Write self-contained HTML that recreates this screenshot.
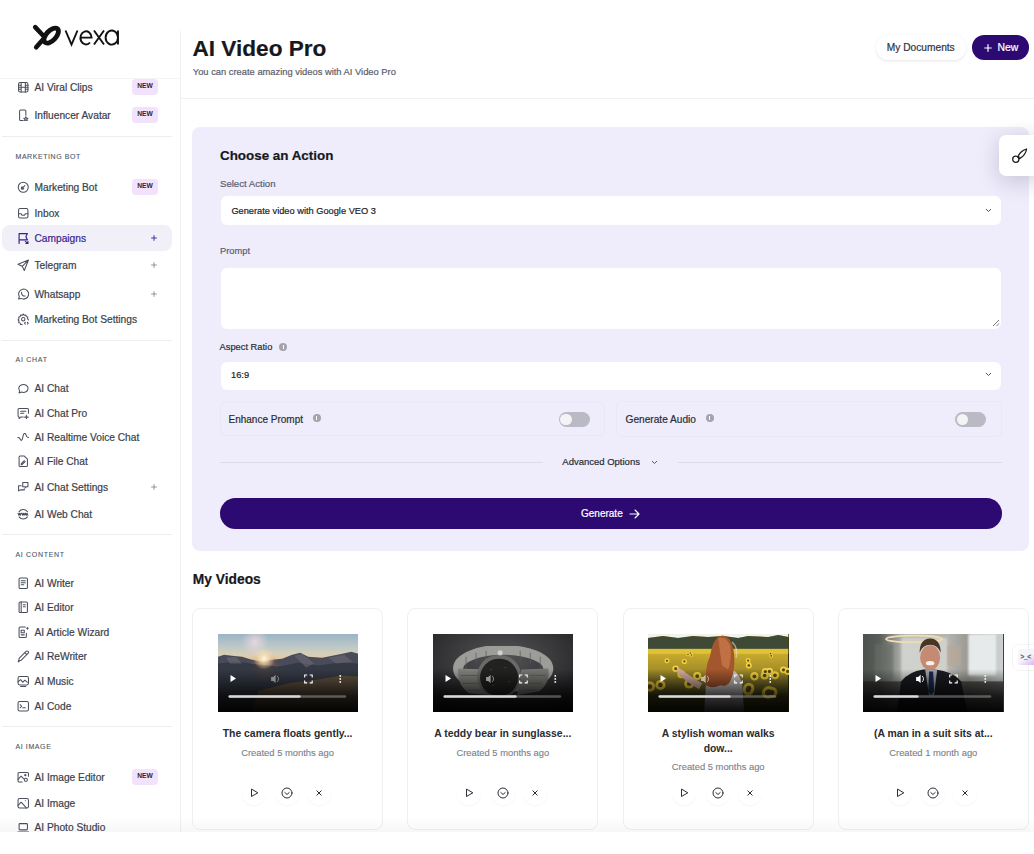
<!DOCTYPE html>
<html><head><meta charset="utf-8">
<style>
*{box-sizing:border-box;margin:0;padding:0}
html,body{width:1034px;height:854px;overflow:hidden;background:#fff}
body{font-family:"Liberation Sans",sans-serif;color:#1f2128;position:relative;-webkit-text-stroke:0.2px}
.abs{position:absolute}
#page{position:absolute;left:0;top:0;width:1034px;height:832px;overflow:hidden;background:#fff}
#side{position:absolute;left:0;top:0;width:180px;height:832px;background:#fff}
#logoline{position:absolute;left:0;top:78px;width:180px;height:1px;background:#f3f4f6}
.it{position:absolute;left:2px;width:170px;height:26px;line-height:24px;font-size:10.2px;color:#3a3f4b;white-space:nowrap}
.it.act{color:#3b1f8c}
.it.act:before{content:'';position:absolute;left:0;top:-1.4px;width:169.5px;height:26.2px;background:#f1eff8;border-radius:8px}
.it .tx{position:absolute;left:32.5px;top:1px}
.it svg{position:absolute;left:14.5px;top:6px;width:12.5px;height:12.5px}
.badge{position:absolute;left:130px;top:4px;width:26px;height:16px;border-radius:4px;background:#f3e2fb;color:#2a2540;font-size:6.7px;font-weight:700;line-height:14.5px;text-align:center;-webkit-text-stroke:0}
.it svg.plus{position:absolute;left:149.1px;top:9px;width:6px;height:6px;stroke:#858a94}
.it.act svg.plus{stroke:#3b1f8c}
.sec{position:absolute;left:15.5px;font-size:7px;font-weight:400;color:#4f545f;-webkit-text-stroke:0.1px;letter-spacing:0.5px;height:12px;line-height:12px}
.sep{position:absolute;left:2px;width:170px;height:1px;background:#eceef1}
</style></head>
<body>
<div id="page">
<div id="side">
<svg class="abs" style="left:28px;top:20px" width="95" height="34" viewBox="0 0 95 34">
<g fill="none" stroke="#111" stroke-linecap="round">
<path d="M7.2 7.2 L16 16.5" stroke-width="4.6"/>
<path d="M8.2 27.3 L15 19.5" stroke-width="4.6"/>
<ellipse cx="23.2" cy="15.6" rx="9.2" ry="4.9" transform="rotate(-47 23.2 15.6)" stroke-width="4.8"/>
<g stroke-width="1.9" stroke-linecap="butt" stroke-linejoin="miter">
<path d="M37.5 10.5 L43.5 24.5 L49.5 10.5"/>
<path d="M52.5 17.6 H63.6 A5.6 6.6 0 1 0 62 22.5"/>
<path d="M66 10.5 L76 24.5 M76 10.5 L66 24.5"/>
<path d="M90 10.5 V24.5 M90 17.5 A6.2 7 0 1 0 90 17.6"/>
</g></g></svg>
<div id="logoline"></div>
<div class="it" style="top:75.0px"><svg viewBox="0 0 12 12" stroke="#4a4f5c" stroke-width="1" fill="none" stroke-linecap="round" stroke-linejoin="round"><rect x="1.5" y="1.5" width="9" height="9" rx="1.5"/><path d="M4 1.5v9M8 1.5v9M1.5 6h9M1.5 4h2.5M1.5 8h2.5M8 4h2.5M8 8h2.5"/></svg><span class="tx">AI Viral Clips</span><div class="badge">NEW</div></div>
<div class="it" style="top:102.7px"><svg viewBox="0 0 12 12" stroke="#4a4f5c" stroke-width="1" fill="none" stroke-linecap="round" stroke-linejoin="round"><path d="M6 11H3.5a1 1 0 0 1-1-1V2a1 1 0 0 1 1-1h4a1 1 0 0 1 1 1v4"/><path d="M8.5 7.5l.7 1.3 1.3.2-1 .9.3 1.3-1.3-.7-1.2.7.3-1.3-1-.9 1.3-.2z"/></svg><span class="tx">Influencer Avatar</span><div class="badge">NEW</div></div>
<div class="sep" style="top:136.2px"></div>
<div class="sec" style="top:150.8px;letter-spacing:0.56px">MARKETING BOT</div>
<div class="it" style="top:174.9px"><svg viewBox="0 0 12 12" stroke="#4a4f5c" stroke-width="1" fill="none" stroke-linecap="round" stroke-linejoin="round"><circle cx="6" cy="6" r="4.8"/><path d="M4.5 7.5l3-3M5 5.5a1.2 1.2 0 1 0 1.5 1.5"/></svg><span class="tx">Marketing Bot</span><div class="badge">NEW</div></div>
<div class="it" style="top:200.7px"><svg viewBox="0 0 12 12" stroke="#4a4f5c" stroke-width="1" fill="none" stroke-linecap="round" stroke-linejoin="round"><rect x="1.5" y="1.5" width="9" height="9" rx="1.5"/><path d="M1.5 6.5h2.5l.8 1.5h2.4l.8-1.5h2.5"/></svg><span class="tx">Inbox</span></div>
<div class="it act" style="top:226.2px"><svg viewBox="0 0 12 12" stroke="#3b1f8c" stroke-width="1.1" fill="none" stroke-linecap="round" stroke-linejoin="round"><path d="M2 11V1.5h8L8.5 4.5 10 7.5H2"/><path d="M8 9l2.5 2M10.5 9v2H8.5"/></svg><span class="tx">Campaigns</span><svg class="plus" viewBox="0 0 6 6"><path d="M3 0.2v5.6M0.2 3h5.6" stroke-width="0.9"/></svg></div>
<div class="it" style="top:253.4px"><svg viewBox="0 0 12 12" stroke="#4a4f5c" stroke-width="1" fill="none" stroke-linecap="round" stroke-linejoin="round"><path d="M11 1L1 5l4 2 2 4z M5 7l6-6"/></svg><span class="tx">Telegram</span><svg class="plus" viewBox="0 0 6 6"><path d="M3 0.2v5.6M0.2 3h5.6" stroke-width="0.9"/></svg></div>
<div class="it" style="top:281.5px"><svg viewBox="0 0 12 12" stroke="#4a4f5c" stroke-width="1" fill="none" stroke-linecap="round" stroke-linejoin="round"><path d="M1.5 10.5l.7-2.3A4.8 4.8 0 1 1 4 10z"/><path d="M4.3 4.2c0 2 1.5 3.5 3.5 3.5"/></svg><span class="tx">Whatsapp</span><svg class="plus" viewBox="0 0 6 6"><path d="M3 0.2v5.6M0.2 3h5.6" stroke-width="0.9"/></svg></div>
<div class="it" style="top:306.7px"><svg viewBox="0 0 12 12" stroke="#4a4f5c" stroke-width="1" fill="none" stroke-linecap="round" stroke-linejoin="round"><path d="M6 1l1 1.2 1.5-.3.5 1.5 1.4.6-.3 1.5L11 6.6M6 1L5 2.2 3.5 1.9 3 3.4l-1.4.6.3 1.5L1 6.6l.9 1 -.3 1.5 1.4.6.5 1.5 1.5-.3"/><circle cx="6" cy="6" r="1.6"/><path d="M8 9l-.8.8.8.8M10 9l.8.8-.8.8"/></svg><span class="tx">Marketing Bot Settings</span></div>
<div class="sep" style="top:339.5px"></div>
<div class="sec" style="top:353.9px;letter-spacing:0.73px">AI CHAT</div>
<div class="it" style="top:376.3px"><svg viewBox="0 0 12 12" stroke="#4a4f5c" stroke-width="1" fill="none" stroke-linecap="round" stroke-linejoin="round"><path d="M2 10.5l.6-2A4.5 3.8 0 1 1 4.5 9.7z"/></svg><span class="tx">AI Chat</span></div>
<div class="it" style="top:400.7px"><svg viewBox="0 0 12 12" stroke="#4a4f5c" stroke-width="1" fill="none" stroke-linecap="round" stroke-linejoin="round"><path d="M6 9.5H4L2 11V9.5a1 1 0 0 1-1-1V2.5a1 1 0 0 1 1-1h8a1 1 0 0 1 1 1V6"/><path d="M3.5 4h5M3.5 6h3M9 8v3.5M7.3 9.7h3.5"/></svg><span class="tx">AI Chat Pro</span></div>
<div class="it" style="top:425.0px"><svg viewBox="0 0 12 12" stroke="#4a4f5c" stroke-width="1" fill="none" stroke-linecap="round" stroke-linejoin="round"><path d="M0.8 6.2 Q2.5 6 3.2 8 Q4 10.2 5 8 L6.2 3.5 Q7 1.8 8 2.6 Q8.8 3.4 9.2 5.2 Q9.6 6.2 11.2 6.2"/></svg><span class="tx">AI Realtime Voice Chat</span></div>
<div class="it" style="top:449.4px"><svg viewBox="0 0 12 12" stroke="#4a4f5c" stroke-width="1" fill="none" stroke-linecap="round" stroke-linejoin="round"><path d="M7 1H3a1 1 0 0 0-1 1v8a1 1 0 0 0 1 1h6a1 1 0 0 0 1-1V4z"/><path d="M4 8.5l3-3 .8.8-3 3H4z"/></svg><span class="tx">AI File Chat</span></div>
<div class="it" style="top:475.4px"><svg viewBox="0 0 12 12" stroke="#4a4f5c" stroke-width="1" fill="none" stroke-linecap="round" stroke-linejoin="round"><path d="M5.5 1.5h5v4H9l-1 1v-1H5.5zM4 4.5H1.5v5L3 8.5h4V7.5"/></svg><span class="tx">AI Chat Settings</span><svg class="plus" viewBox="0 0 6 6"><path d="M3 0.2v5.6M0.2 3h5.6" stroke-width="0.9"/></svg></div>
<div class="it" style="top:501.9px"><svg viewBox="0 0 12 12" stroke="#4a4f5c" stroke-width="1" fill="none" stroke-linecap="round" stroke-linejoin="round"><path d="M2 3.5a5 5 0 0 1 8 0M2 8.5a5 5 0 0 0 8 0M1 5l.8 2 .7-2 .7 2 .8-2M4.7 5l.8 2 .7-2 .7 2 .8-2M8.2 5l.8 2 .7-2 .7 2"/></svg><span class="tx">AI Web Chat</span></div>
<div class="sep" style="top:533.5px"></div>
<div class="sec" style="top:549.0px;letter-spacing:0.68px">AI CONTENT</div>
<div class="it" style="top:571.0px"><svg viewBox="0 0 12 12" stroke="#4a4f5c" stroke-width="1" fill="none" stroke-linecap="round" stroke-linejoin="round"><rect x="2" y="1" width="8" height="10" rx="1"/><path d="M4 3.5h4M4 5.5h4M4 7.5h2.5"/></svg><span class="tx">AI Writer</span></div>
<div class="it" style="top:595.4px"><svg viewBox="0 0 12 12" stroke="#4a4f5c" stroke-width="1" fill="none" stroke-linecap="round" stroke-linejoin="round"><rect x="2" y="1" width="8" height="10" rx="1"/><path d="M4 1v10M6 3.5h2M6 5.5h2"/></svg><span class="tx">AI Editor</span></div>
<div class="it" style="top:619.8px"><svg viewBox="0 0 12 12" stroke="#4a4f5c" stroke-width="1" fill="none" stroke-linecap="round" stroke-linejoin="round"><path d="M8 1H3a1 1 0 0 0-1 1v8a1 1 0 0 0 1 1h5a1 1 0 0 0 1-1V7"/><rect x="4" y="4" width="3" height="2.5"/><path d="M4 8.5h3M10 1.5v1.5M9.2 2.2h1.6"/></svg><span class="tx">AI Article Wizard</span></div>
<div class="it" style="top:644.2px"><svg viewBox="0 0 12 12" stroke="#4a4f5c" stroke-width="1" fill="none" stroke-linecap="round" stroke-linejoin="round"><path d="M1.5 10.5l.7-2.6 6.5-6.5a1.3 1.3 0 0 1 1.9 1.9L4.1 9.8z M7.5 2.6l1.9 1.9M1 11.2h1"/></svg><span class="tx">AI ReWriter</span></div>
<div class="it" style="top:669.3px"><svg viewBox="0 0 12 12" stroke="#4a4f5c" stroke-width="1" fill="none" stroke-linecap="round" stroke-linejoin="round"><rect x="1" y="1.5" width="10" height="8" rx="1.5"/><path d="M1 6.5l2.5-2 2 2.5 2-2 2.5 2M3.5 11h5"/></svg><span class="tx">AI Music</span></div>
<div class="it" style="top:693.7px"><svg viewBox="0 0 12 12" stroke="#4a4f5c" stroke-width="1" fill="none" stroke-linecap="round" stroke-linejoin="round"><rect x="1" y="1.5" width="10" height="9" rx="1.5"/><path d="M3 4.5l1.5 1.5L3 7.5M5.5 7.5h2.5"/></svg><span class="tx">AI Code</span></div>
<div class="sep" style="top:726.4px"></div>
<div class="sec" style="top:740.9px;letter-spacing:0.6px">AI IMAGE</div>
<div class="it" style="top:764.6px"><svg viewBox="0 0 12 12" stroke="#4a4f5c" stroke-width="1" fill="none" stroke-linecap="round" stroke-linejoin="round"><path d="M11 5V2.5a1 1 0 0 0-1-1H2a1 1 0 0 0-1 1v7a1 1 0 0 0 1 1h3"/><path d="M1 8l3-3 2.5 2.5"/><circle cx="8.5" cy="8.5" r="1.5"/><circle cx="8" cy="4" r=".6"/></svg><span class="tx">AI Image Editor</span><div class="badge">NEW</div></div>
<div class="it" style="top:790.7px"><svg viewBox="0 0 12 12" stroke="#4a4f5c" stroke-width="1" fill="none" stroke-linecap="round" stroke-linejoin="round"><rect x="1" y="1.5" width="10" height="9" rx="1.5"/><path d="M1 8l3-3 5 5.5M8 3.5h.1"/></svg><span class="tx">AI Image</span></div>
<div class="it" style="top:814.8px"><svg viewBox="0 0 12 12" stroke="#4a4f5c" stroke-width="1" fill="none" stroke-linecap="round" stroke-linejoin="round"><rect x="2" y="2.5" width="8" height="6" rx=".8"/><path d="M.8 10.5h10.4"/></svg><span class="tx">AI Photo Studio</span></div>
</div>
<div id="main">
<style>
.t{position:absolute;white-space:nowrap}
.card{position:absolute;left:192px;top:127px;width:837px;height:424px;background:#efedfb;border-radius:8px}
.inp{position:absolute;background:#fff;border-radius:6px}
.lbl{font-size:9.4px;color:#566076}
.tog{position:absolute;width:31px;height:14.5px;border-radius:8px;background:#b9bac4}
.tog:after{content:"";position:absolute;left:1.5px;top:1.5px;width:11.5px;height:11.5px;border-radius:50%;background:#f4f4f6}
.info{position:absolute;width:8px;height:8px;border-radius:50%;background:#a3a5ae}
.info:after{content:"";position:absolute;left:3.4px;top:2px;width:1.2px;height:4px;background:#fff}
.opt{position:absolute;border:1px solid #eae8f8;border-radius:5px}
.vc{position:absolute;top:608px;width:190.8px;height:221.5px;border:1px solid #eff0f2;border-radius:8px;background:#fff}
.thumb{position:absolute;left:24.5px;top:24.5px;width:140.3px;height:78px;overflow:hidden;background:#000}
.vt{position:absolute;left:0;width:188.8px;text-align:center;font-size:10.4px;font-weight:700;color:#2a2c31;line-height:14px;-webkit-text-stroke:0}
.vd{position:absolute;left:0;width:188.8px;text-align:center;font-size:9.4px;color:#7a7e88;line-height:12px;-webkit-text-stroke:0.1px}
.ab{position:absolute;top:172px;width:24px;height:24px;border-radius:50%;background:#fff;box-shadow:0 1px 2px rgba(0,0,0,0.045)}
.ab svg{position:absolute;left:6px;top:6px;width:12px;height:12px}
</style>
<div class="abs" style="left:180px;top:31px;width:1px;height:801px;background:#eef0f3"></div>
<div class="abs" style="left:181px;top:98px;width:853px;height:1px;background:#f0f1f3"></div>
<div class="t" style="left:192.5px;top:34px;height:30px;line-height:30px;font-size:22.6px;font-weight:700;color:#16181d">AI Video Pro</div>
<div class="t" style="left:192.8px;top:66.2px;height:12px;line-height:12px;font-size:9.35px;color:#5c606c">You can create amazing videos with AI Video Pro</div>
<div class="abs" style="left:875.5px;top:35.4px;width:90.5px;height:24.6px;border-radius:12.3px;background:#fff;box-shadow:0 1px 3px rgba(0,0,0,0.10);font-size:10.2px;color:#2f333d;text-align:center;line-height:26.4px">My Documents</div>
<div class="abs" style="left:971.7px;top:35.4px;width:57px;height:24.4px;border-radius:12.2px;background:#2c0a72;color:#fff;font-size:10.4px;line-height:24.4px">
 <svg class="abs" style="left:12.3px;top:8.4px" width="8" height="8" viewBox="0 0 8 8"><path d="M4 0.3v7.4M0.3 4h7.4" stroke="#fff" stroke-width="1.2"/></svg>
 <span class="abs" style="left:25.8px;top:1px">New</span></div>

<div class="card"></div>
<div class="t" style="left:220px;top:145.9px;height:20px;line-height:20px;font-size:13.4px;font-weight:700;color:#16181d">Choose an Action</div>
<div class="t lbl" style="left:220px;top:178.1px;height:12px;line-height:12px;font-size:9.6px">Select Action</div>
<div class="inp" style="left:220.7px;top:196.3px;width:780.5px;height:28.4px"></div>
<div class="t" style="left:231.4px;top:205px;height:12px;line-height:12px;font-size:9.25px;color:#1f2128">Generate video with Google VEO 3</div>
<svg class="abs" style="left:984.5px;top:207.5px" width="7" height="5" viewBox="0 0 7 5"><path d="M1 1l2.5 2.5L6 1" stroke="#4a4e58" stroke-width="0.95" fill="none"/></svg>
<div class="t lbl" style="left:220px;top:245.2px;height:12px;line-height:12px;font-size:9.3px">Prompt</div>
<div class="inp" style="left:220.7px;top:267.5px;width:780.5px;height:61.2px"></div>
<svg class="abs" style="left:992px;top:319px" width="8" height="8" viewBox="0 0 8 8"><path d="M7 1L1 7M7 4.5L4.5 7" stroke="#6a6d76" stroke-width="0.9"/></svg>
<div class="t" style="left:219.6px;top:341px;height:12px;line-height:12px;font-size:9.3px;color:#2a2d36">Aspect Ratio</div>
<div class="info" style="left:279.4px;top:343px"></div>
<div class="inp" style="left:220.7px;top:362px;width:780.5px;height:27.6px"></div>
<div class="t" style="left:231px;top:368.7px;height:12px;line-height:12px;font-size:9.3px;color:#1f2128">16:9</div>
<svg class="abs" style="left:984.5px;top:372px" width="7" height="5" viewBox="0 0 7 5"><path d="M1 1l2.5 2.5L6 1" stroke="#4a4e58" stroke-width="0.95" fill="none"/></svg>
<div class="opt" style="left:219.6px;top:402px;width:385px;height:34px"></div>
<div class="t" style="left:228.5px;top:412.5px;height:13px;line-height:13px;font-size:10px;color:#2a2d36">Enhance Prompt</div>
<div class="info" style="left:312.6px;top:413.7px"></div>
<div class="tog" style="left:558.7px;top:412px"></div>
<div class="opt" style="left:615.9px;top:401px;width:386.6px;height:36px"></div>
<div class="t" style="left:625.6px;top:412.5px;height:13px;line-height:13px;font-size:10.15px;color:#2a2d36">Generate Audio</div>
<div class="info" style="left:705.5px;top:413.7px"></div>
<div class="tog" style="left:955.2px;top:412.2px"></div>
<div class="abs" style="left:219.6px;top:461.8px;width:323px;height:1px;background:#dcdbe8"></div>
<div class="abs" style="left:678.3px;top:461.8px;width:324.2px;height:1px;background:#dcdbe8"></div>
<div class="t" style="left:562.3px;top:455.6px;height:12px;line-height:12px;font-size:9.5px;color:#2a2d36">Advanced Options</div>
<svg class="abs" style="left:650.5px;top:460px" width="7" height="5" viewBox="0 0 7 5"><path d="M1 1l2.5 2.5L6 1" stroke="#4a4e58" stroke-width="0.95" fill="none"/></svg>
<div class="abs" style="left:219.6px;top:498.3px;width:782.9px;height:30.7px;border-radius:15.4px;background:#2c0a72"></div>
<div class="t" style="left:581px;top:507.9px;height:12px;line-height:12px;font-size:10px;color:#fff">Generate</div>
<svg class="abs" style="left:628.5px;top:509px" width="11" height="10" viewBox="0 0 11 10"><path d="M1 5h9M6 1l4 4-4 4" stroke="#fff" stroke-width="1.1" fill="none" stroke-linecap="round" stroke-linejoin="round"/></svg>

<div class="t" style="left:192.8px;top:569.9px;height:20px;line-height:20px;font-size:13.8px;font-weight:700;color:#16181d">My Videos</div>
<div class="vc" style="left:192.2px"><div class="thumb"><svg width="140.3" height="78" viewBox="0 0 140 79" preserveAspectRatio="none" style="display:block"><defs><linearGradient id="sky" x1="0" y1="0" x2="0" y2="1"><stop offset="0" stop-color="#9cb4c4"/><stop offset="0.16" stop-color="#bcc8c8"/><stop offset="0.26" stop-color="#d8cfb8"/><stop offset="0.34" stop-color="#e8c698"/></linearGradient>
<radialGradient id="sun" cx="0.5" cy="0.5" r="0.5"><stop offset="0" stop-color="#fff8e8" stop-opacity="1"/><stop offset="0.4" stop-color="#ffe8c0" stop-opacity="0.7"/><stop offset="1" stop-color="#ffe0b0" stop-opacity="0"/></radialGradient>
<radialGradient id="pk" cx="0.5" cy="0.5" r="0.5"><stop offset="0" stop-color="#f2dce4" stop-opacity="0.8"/><stop offset="1" stop-color="#f0d8e0" stop-opacity="0"/></radialGradient>
<radialGradient id="glow" cx="0.5" cy="0.5" r="0.5"><stop offset="0" stop-color="#b07840" stop-opacity="0.8"/><stop offset="1" stop-color="#a06030" stop-opacity="0"/></radialGradient>
<filter id="bl1"><feGaussianBlur stdDeviation="0.5"/></filter></defs>
<rect width="140" height="79" fill="url(#sky)"/>
<circle cx="37" cy="8" r="14" fill="url(#pk)"/>
<path d="M0 23 L6 21 L14 22 L24 23 L34 26 L44 28 L54 26 L64 25 L74 21 L82 19 L90 23 L104 24 L114 22 L124 20 L133 18 L140 20 V79 H0Z" fill="#4a4c5a" filter="url(#bl1)"/>
<circle cx="46" cy="34" r="16" fill="url(#glow)"/>
<path d="M0 30 L20 28 L40 31 L60 33 L80 29 L100 32 L120 29 L140 30 V79 H0Z" fill="#30343f" opacity="0.8"/>
<g fill="#6a6a74" opacity="0.6"><path d="M76 22 L84 20 L96 30 L88 34Z"/><path d="M110 24 L126 21 L134 28 L118 30Z"/><path d="M8 24 L18 23 L24 30 L12 30Z"/></g>
<path d="M40 58 L70 50 L100 46 L124 42 L140 43 V79 H34Z" fill="#6a5640" opacity="0.85"/>
<circle cx="46" cy="25" r="11" fill="url(#sun)"/><defs><linearGradient id="bot1" x1="0" y1="0" x2="0" y2="1"><stop offset="0.45" stop-color="#000" stop-opacity="0"/><stop offset="0.8" stop-color="#000" stop-opacity="0.75"/><stop offset="1" stop-color="#000" stop-opacity="0.95"/></linearGradient></defs>
<rect x="0" y="0" width="140" height="79" fill="url(#bot1)"/>
<path d="M12.5 41.5v7l5.5-3.5z" fill="#fff"/>
<path d="M53 43.5h2l2.5-2.2v8.4L55 47.5h-2z" fill="#fff" opacity="0.45"/>
<path d="M59 42.5a4 4 0 0 1 0 6" stroke="#fff" stroke-width="0.9" fill="none" opacity="0.45"/>
<path d="M86.5 44v-2.5h2.5M91.5 41.5H94V44M94 47v2.5h-2.5M89 49.5h-2.5V47" stroke="#fff" stroke-width="1.1" fill="none"/>
<circle cx="122" cy="42.5" r="0.9" fill="#fff"/><circle cx="122" cy="45.5" r="0.9" fill="#fff"/><circle cx="122" cy="48.5" r="0.9" fill="#fff"/>
<rect x="10.5" y="62" width="117.5" height="2.6" rx="1.3" fill="#fff" opacity="0.3"/>
<rect x="10.5" y="62" width="72" height="2.6" rx="1.3" fill="#d8d8d8"/></svg></div><div class="vt" style="top:118.2px">The camera floats gently...</div><div class="vd" style="top:137.8px">Created 5 months ago</div><div class="ab" style="left:48.7px"><svg viewBox="0 0 12 12" stroke="#2a2d36" stroke-width="1" fill="none" stroke-linecap="round" stroke-linejoin="round"><path d="M3.5 2.5v7l6-3.5z"/></svg></div><div class="ab" style="left:82.2px"><svg viewBox="0 0 12 12" stroke="#2a2d36" stroke-width="1" fill="none" stroke-linecap="round" stroke-linejoin="round"><circle cx="6" cy="6" r="5"/><path d="M3.8 5.5l2.2 2 2.2-2"/></svg></div><div class="ab" style="left:114.2px"><svg viewBox="0 0 12 12" stroke="#2a2d36" stroke-width="1" fill="none" stroke-linecap="round" stroke-linejoin="round"><path d="M3.8 3.8l4.4 4.4M8.2 3.8l-4.4 4.4"/></svg></div></div>
<div class="vc" style="left:407.4px"><div class="thumb"><svg width="140.3" height="78" viewBox="0 0 140 79" preserveAspectRatio="none" style="display:block"><defs><radialGradient id="wbg" cx="0.5" cy="0.3" r="0.75"><stop offset="0" stop-color="#545458"/><stop offset="1" stop-color="#1e1e20"/></radialGradient>
<filter id="bl2"><feGaussianBlur stdDeviation="0.6"/></filter></defs>
<rect width="140" height="79" fill="url(#wbg)"/>
<ellipse cx="70" cy="35" rx="45" ry="19" fill="none" stroke="#9c9c98" stroke-width="10" filter="url(#bl2)"/>
<path d="M25 35 Q24 52 36 60 L58 62 L54 36Z" fill="#80807c" filter="url(#bl2)"/>
<path d="M115 35 Q117 50 106 58 L84 62 L88 36Z" fill="#74746f" filter="url(#bl2)"/>
<g stroke="#5a5a56" stroke-width="0.9" opacity="0.8"><path d="M33 23v12M43 19v11M53 17v10M87 17v10M97 19v11M107 23v12M28 42h16M96 42h16M30 50h16M94 50h14M34 57h14M92 57h12"/></g>
<circle cx="66" cy="43" r="22" fill="#6a6a68"/>
<circle cx="66" cy="44" r="19" fill="#222220"/>
<g fill="#8a8a60" opacity="0.6"><circle cx="58" cy="36" r="0.6"/><circle cx="72" cy="34" r="0.6"/><circle cx="60" cy="52" r="0.6"/><circle cx="76" cy="48" r="0.6"/></g>
<circle cx="67" cy="19" r="2.6" fill="#d0d0d0"/><defs><linearGradient id="bot2" x1="0" y1="0" x2="0" y2="1"><stop offset="0.45" stop-color="#000" stop-opacity="0"/><stop offset="0.8" stop-color="#000" stop-opacity="0.75"/><stop offset="1" stop-color="#000" stop-opacity="0.95"/></linearGradient></defs>
<rect x="0" y="0" width="140" height="79" fill="url(#bot2)"/>
<path d="M12.5 41.5v7l5.5-3.5z" fill="#fff"/>
<path d="M53 43.5h2l2.5-2.2v8.4L55 47.5h-2z" fill="#fff" opacity="0.55"/>
<path d="M59 42.5a4 4 0 0 1 0 6" stroke="#fff" stroke-width="0.9" fill="none" opacity="0.55"/>
<path d="M86.5 44v-2.5h2.5M91.5 41.5H94V44M94 47v2.5h-2.5M89 49.5h-2.5V47" stroke="#fff" stroke-width="1.1" fill="none"/>
<circle cx="122" cy="42.5" r="0.9" fill="#fff"/><circle cx="122" cy="45.5" r="0.9" fill="#fff"/><circle cx="122" cy="48.5" r="0.9" fill="#fff"/>
<rect x="10.5" y="62" width="117.5" height="2.6" rx="1.3" fill="#fff" opacity="0.3"/>
<rect x="10.5" y="62" width="73" height="2.6" rx="1.3" fill="#d8d8d8"/></svg></div><div class="vt" style="top:118.2px">A teddy bear in sunglasse...</div><div class="vd" style="top:137.8px">Created 5 months ago</div><div class="ab" style="left:48.7px"><svg viewBox="0 0 12 12" stroke="#2a2d36" stroke-width="1" fill="none" stroke-linecap="round" stroke-linejoin="round"><path d="M3.5 2.5v7l6-3.5z"/></svg></div><div class="ab" style="left:82.2px"><svg viewBox="0 0 12 12" stroke="#2a2d36" stroke-width="1" fill="none" stroke-linecap="round" stroke-linejoin="round"><circle cx="6" cy="6" r="5"/><path d="M3.8 5.5l2.2 2 2.2-2"/></svg></div><div class="ab" style="left:114.2px"><svg viewBox="0 0 12 12" stroke="#2a2d36" stroke-width="1" fill="none" stroke-linecap="round" stroke-linejoin="round"><path d="M3.8 3.8l4.4 4.4M8.2 3.8l-4.4 4.4"/></svg></div></div>
<div class="vc" style="left:622.8px"><div class="thumb"><svg width="140.3" height="78" viewBox="0 0 140 79" preserveAspectRatio="none" style="display:block"><defs><linearGradient id="fld" x1="0" y1="0" x2="0" y2="1"><stop offset="0.15" stop-color="#d8b830"/><stop offset="0.45" stop-color="#a8902a"/><stop offset="0.8" stop-color="#4a4a1e"/></linearGradient>
<filter id="bl3"><feGaussianBlur stdDeviation="0.5"/></filter></defs>
<rect width="140" height="79" fill="url(#fld)"/>
<path d="M0 0 H140 V3 L130 1 L120 3 L100 2 L90 4 L75 2 L60 3 L45 2 L30 4 L15 2 L0 4Z" fill="#f2f2ee"/>
<path d="M0 4 L15 2 L30 4 L45 2 L60 3 L75 2 L90 4 L100 2 L120 3 L130 1 L140 3 V15.5 H0Z" fill="#3e4a36"/>
<rect x="0" y="15" width="140" height="5" fill="#e2c438" opacity="0.9"/>
<g fill="#f4d238"><circle cx="33.3" cy="40.9" r="3.9"/><circle cx="1.8" cy="53.2" r="5.3"/><circle cx="36.3" cy="27.8" r="2.6"/><circle cx="139.4" cy="37.8" r="3.6"/><circle cx="117.1" cy="38.0" r="3.6"/><circle cx="106.2" cy="42.8" r="4.2"/><circle cx="42.2" cy="19.3" r="1.6"/><circle cx="121.2" cy="37.9" r="3.6"/><circle cx="100.6" cy="54.9" r="5.5"/><circle cx="100.0" cy="56.7" r="5.6"/><circle cx="123.0" cy="22.1" r="1.9"/><circle cx="19.0" cy="27.1" r="2.5"/><circle cx="135.2" cy="36.3" r="3.5"/><circle cx="49.1" cy="42.6" r="4.1"/><circle cx="119.9" cy="59.6" r="6.0"/><circle cx="120.5" cy="58.5" r="5.8"/><circle cx="126.7" cy="41.9" r="4.1"/><circle cx="99.9" cy="26.9" r="2.5"/><circle cx="116.4" cy="42.1" r="4.1"/><circle cx="39.9" cy="20.7" r="1.8"/><circle cx="119.6" cy="59.6" r="6.0"/><circle cx="12.4" cy="51.6" r="5.1"/><circle cx="41.1" cy="50.3" r="5.0"/><circle cx="122.2" cy="19.9" r="1.7"/><circle cx="100.6" cy="31.9" r="3.0"/><circle cx="123.3" cy="59.2" r="5.9"/><circle cx="43.4" cy="21.2" r="1.8"/><circle cx="27.6" cy="35.1" r="3.3"/></g>
<g fill="#3a3010" opacity="0.85"><circle cx="33.3" cy="40.9" r="1.8"/><circle cx="1.8" cy="53.2" r="2.4"/><circle cx="36.3" cy="27.8" r="1.1"/><circle cx="139.4" cy="37.8" r="1.6"/><circle cx="117.1" cy="38.0" r="1.6"/><circle cx="106.2" cy="42.8" r="1.9"/><circle cx="42.2" cy="19.3" r="0.7"/><circle cx="121.2" cy="37.9" r="1.6"/><circle cx="100.6" cy="54.9" r="2.5"/><circle cx="100.0" cy="56.7" r="2.5"/><circle cx="123.0" cy="22.1" r="0.9"/><circle cx="19.0" cy="27.1" r="1.1"/><circle cx="135.2" cy="36.3" r="1.6"/><circle cx="49.1" cy="42.6" r="1.9"/><circle cx="119.9" cy="59.6" r="2.7"/><circle cx="120.5" cy="58.5" r="2.6"/><circle cx="126.7" cy="41.9" r="1.8"/><circle cx="99.9" cy="26.9" r="1.1"/><circle cx="116.4" cy="42.1" r="1.8"/><circle cx="39.9" cy="20.7" r="0.8"/><circle cx="119.6" cy="59.6" r="2.7"/><circle cx="12.4" cy="51.6" r="2.3"/><circle cx="41.1" cy="50.3" r="2.2"/><circle cx="122.2" cy="19.9" r="0.8"/><circle cx="100.6" cy="31.9" r="1.3"/><circle cx="123.3" cy="59.2" r="2.7"/><circle cx="43.4" cy="21.2" r="0.8"/><circle cx="27.6" cy="35.1" r="1.5"/></g>
<path d="M56 79 L58 48 Q62 38 70 36 L84 36 Q92 40 94 52 L96 79Z" fill="#c8c0c0" filter="url(#bl3)"/>
<path d="M30 34 Q38 40 54 50 L51 56 Q38 49 28 38Z" fill="#d4aca0" filter="url(#bl3)"/>
<path d="M58 52 Q56 36 62 22 Q64 8 70 3 Q76 -1 81 5 Q86 12 86 24 Q87 38 82 48 Q78 54 72 52 Q64 56 58 52Z" fill="#a4562e" filter="url(#bl3)"/>
<path d="M70 4 Q78 2 82 12 Q84 24 80 36 L74 32 Q72 20 70 4Z" fill="#c8784a" opacity="0.8" filter="url(#bl3)"/>
<path d="M84 8 Q90 14 88 24" stroke="#f0e0c0" stroke-width="1.5" fill="none" opacity="0.6"/><defs><linearGradient id="bot3" x1="0" y1="0" x2="0" y2="1"><stop offset="0.45" stop-color="#000" stop-opacity="0"/><stop offset="0.8" stop-color="#000" stop-opacity="0.75"/><stop offset="1" stop-color="#000" stop-opacity="0.95"/></linearGradient></defs>
<rect x="0" y="0" width="140" height="79" fill="url(#bot3)"/>
<path d="M12.5 41.5v7l5.5-3.5z" fill="#fff"/>
<path d="M53 43.5h2l2.5-2.2v8.4L55 47.5h-2z" fill="#fff" opacity="0.6"/>
<path d="M59 42.5a4 4 0 0 1 0 6" stroke="#fff" stroke-width="0.9" fill="none" opacity="0.6"/>
<path d="M86.5 44v-2.5h2.5M91.5 41.5H94V44M94 47v2.5h-2.5M89 49.5h-2.5V47" stroke="#fff" stroke-width="1.1" fill="none"/>
<circle cx="122" cy="42.5" r="0.9" fill="#fff"/><circle cx="122" cy="45.5" r="0.9" fill="#fff"/><circle cx="122" cy="48.5" r="0.9" fill="#fff"/>
<rect x="10.5" y="62" width="117.5" height="2.6" rx="1.3" fill="#fff" opacity="0.3"/>
<rect x="10.5" y="62" width="72" height="2.6" rx="1.3" fill="#d8d8d8"/></svg></div><div class="vt" style="top:118.2px">A stylish woman walks</div><div class="vt" style="top:132.8px">dow...</div><div class="vd" style="top:151.7px">Created 5 months ago</div><div class="ab" style="left:48.7px"><svg viewBox="0 0 12 12" stroke="#2a2d36" stroke-width="1" fill="none" stroke-linecap="round" stroke-linejoin="round"><path d="M3.5 2.5v7l6-3.5z"/></svg></div><div class="ab" style="left:82.2px"><svg viewBox="0 0 12 12" stroke="#2a2d36" stroke-width="1" fill="none" stroke-linecap="round" stroke-linejoin="round"><circle cx="6" cy="6" r="5"/><path d="M3.8 5.5l2.2 2 2.2-2"/></svg></div><div class="ab" style="left:114.2px"><svg viewBox="0 0 12 12" stroke="#2a2d36" stroke-width="1" fill="none" stroke-linecap="round" stroke-linejoin="round"><path d="M3.8 3.8l4.4 4.4M8.2 3.8l-4.4 4.4"/></svg></div></div>
<div class="vc" style="left:837.9px"><div class="thumb"><svg width="140.3" height="78" viewBox="0 0 140 79" preserveAspectRatio="none" style="display:block"><defs><linearGradient id="off" x1="0" y1="0" x2="1" y2="0"><stop offset="0" stop-color="#4e524e"/><stop offset="0.12" stop-color="#5a5e5a"/><stop offset="0.3" stop-color="#b8bab6"/><stop offset="0.6" stop-color="#b6b4ae"/><stop offset="0.75" stop-color="#9a9892"/><stop offset="1" stop-color="#cfd3d3"/></linearGradient>
<filter id="bl4"><feGaussianBlur stdDeviation="1.2"/></filter><filter id="bl5"><feGaussianBlur stdDeviation="0.6"/></filter></defs>
<rect width="140" height="79" fill="url(#off)"/>
<rect x="105" y="0" width="28" height="42" fill="#e6eaea" filter="url(#bl4)"/>
<rect x="38" y="4" width="46" height="42" fill="#d8dad6" opacity="0.75" filter="url(#bl4)"/>
<rect x="12" y="10" width="18" height="36" fill="#6a6e68" opacity="0.6" filter="url(#bl4)"/>
<rect x="84" y="12" width="14" height="20" fill="#b8a898" opacity="0.6" filter="url(#bl5)"/>
<ellipse cx="51" cy="5" rx="28" ry="3.4" fill="none" stroke="#f2ddb0" stroke-width="1.8" filter="url(#bl5)"/>
<rect x="0" y="48" width="140" height="31" fill="#2a2a28" opacity="0.65"/>
<path d="M34 79 L38 48 Q46 38 60 36 L72 36 Q90 38 98 48 L104 79Z" fill="#1b1c22"/>
<path d="M62 36 L74 36 L71 62 L66 62Z" fill="#a0a4a8"/>
<path d="M66 38 L70 38 L71 58 L68 62 L65 58Z" fill="#1c2a50"/>
<ellipse cx="67" cy="24" rx="10" ry="12.5" fill="#c48a72" filter="url(#bl5)"/>
<path d="M56.5 19 Q56.5 5 67 4.5 Q77.5 5 77.5 19 Q74.5 11 67 11 Q59.5 11 56.5 19Z" fill="#4a3428" filter="url(#bl5)"/>
<ellipse cx="67" cy="29.5" rx="4.2" ry="2.2" fill="#f4f0ea"/><defs><linearGradient id="bot4" x1="0" y1="0" x2="0" y2="1"><stop offset="0.45" stop-color="#000" stop-opacity="0"/><stop offset="0.8" stop-color="#000" stop-opacity="0.75"/><stop offset="1" stop-color="#000" stop-opacity="0.95"/></linearGradient></defs>
<rect x="0" y="0" width="140" height="79" fill="url(#bot4)"/>
<path d="M12.5 41.5v7l5.5-3.5z" fill="#fff"/>
<path d="M53 43.5h2l2.5-2.2v8.4L55 47.5h-2z" fill="#fff" opacity="1"/>
<path d="M59 42.5a4 4 0 0 1 0 6" stroke="#fff" stroke-width="0.9" fill="none" opacity="1"/>
<path d="M86.5 44v-2.5h2.5M91.5 41.5H94V44M94 47v2.5h-2.5M89 49.5h-2.5V47" stroke="#fff" stroke-width="1.1" fill="none"/>
<circle cx="122" cy="42.5" r="0.9" fill="#fff"/><circle cx="122" cy="45.5" r="0.9" fill="#fff"/><circle cx="122" cy="48.5" r="0.9" fill="#fff"/>
<rect x="10.5" y="62" width="117.5" height="2.6" rx="1.3" fill="#fff" opacity="0.3"/>
<rect x="10.5" y="62" width="45" height="2.6" rx="1.3" fill="#d8d8d8"/></svg></div><div class="vt" style="top:118.2px">(A man in a suit sits at...</div><div class="vd" style="top:137.8px">Created 1 month ago</div><div class="ab" style="left:48.7px"><svg viewBox="0 0 12 12" stroke="#2a2d36" stroke-width="1" fill="none" stroke-linecap="round" stroke-linejoin="round"><path d="M3.5 2.5v7l6-3.5z"/></svg></div><div class="ab" style="left:82.2px"><svg viewBox="0 0 12 12" stroke="#2a2d36" stroke-width="1" fill="none" stroke-linecap="round" stroke-linejoin="round"><circle cx="6" cy="6" r="5"/><path d="M3.8 5.5l2.2 2 2.2-2"/></svg></div><div class="ab" style="left:114.2px"><svg viewBox="0 0 12 12" stroke="#2a2d36" stroke-width="1" fill="none" stroke-linecap="round" stroke-linejoin="round"><path d="M3.8 3.8l4.4 4.4M8.2 3.8l-4.4 4.4"/></svg></div></div>

<div class="abs" style="left:999px;top:135px;width:50px;height:41px;border-radius:7px;background:#fff;box-shadow:0 5px 22px rgba(30,30,70,0.20)"></div>
<svg class="abs" style="left:1010px;top:146px" width="20" height="20" viewBox="0 0 20 20"><g fill="none" stroke="#1b1d22" stroke-width="1.3" stroke-linejoin="round"><circle cx="5.8" cy="13.3" r="3.1"/><path d="M8 11.2 C8.4 7.8 12.4 4.2 16.6 3 C15.8 7.6 13 10.8 9.6 12.6 Z"/><path d="M8.6 10.2 L10.2 11.8" stroke-width="1"/></g></svg>
<div class="abs" style="left:1011.6px;top:643.7px;width:40px;height:27px;border-radius:6px;border:1px solid rgba(0,0,0,0.045)"></div>
<div class="abs" style="left:1017.9px;top:649.3px;width:24px;height:15.5px;border-radius:3px;background:linear-gradient(150deg,rgba(244,242,250,0.85) 45%,#cc9ef4)"></div>
<div class="t" style="left:1020.5px;top:650.5px;font-size:6.5px;line-height:11px;color:#666;font-weight:700;letter-spacing:-0.3px">&gt;_&lt;</div>

<div class="abs" style="left:0;top:816px;width:1034px;height:16px;background:linear-gradient(to bottom,rgba(0,0,0,0),rgba(0,0,0,0.03))"></div>

</div>
</div>
</body></html>
